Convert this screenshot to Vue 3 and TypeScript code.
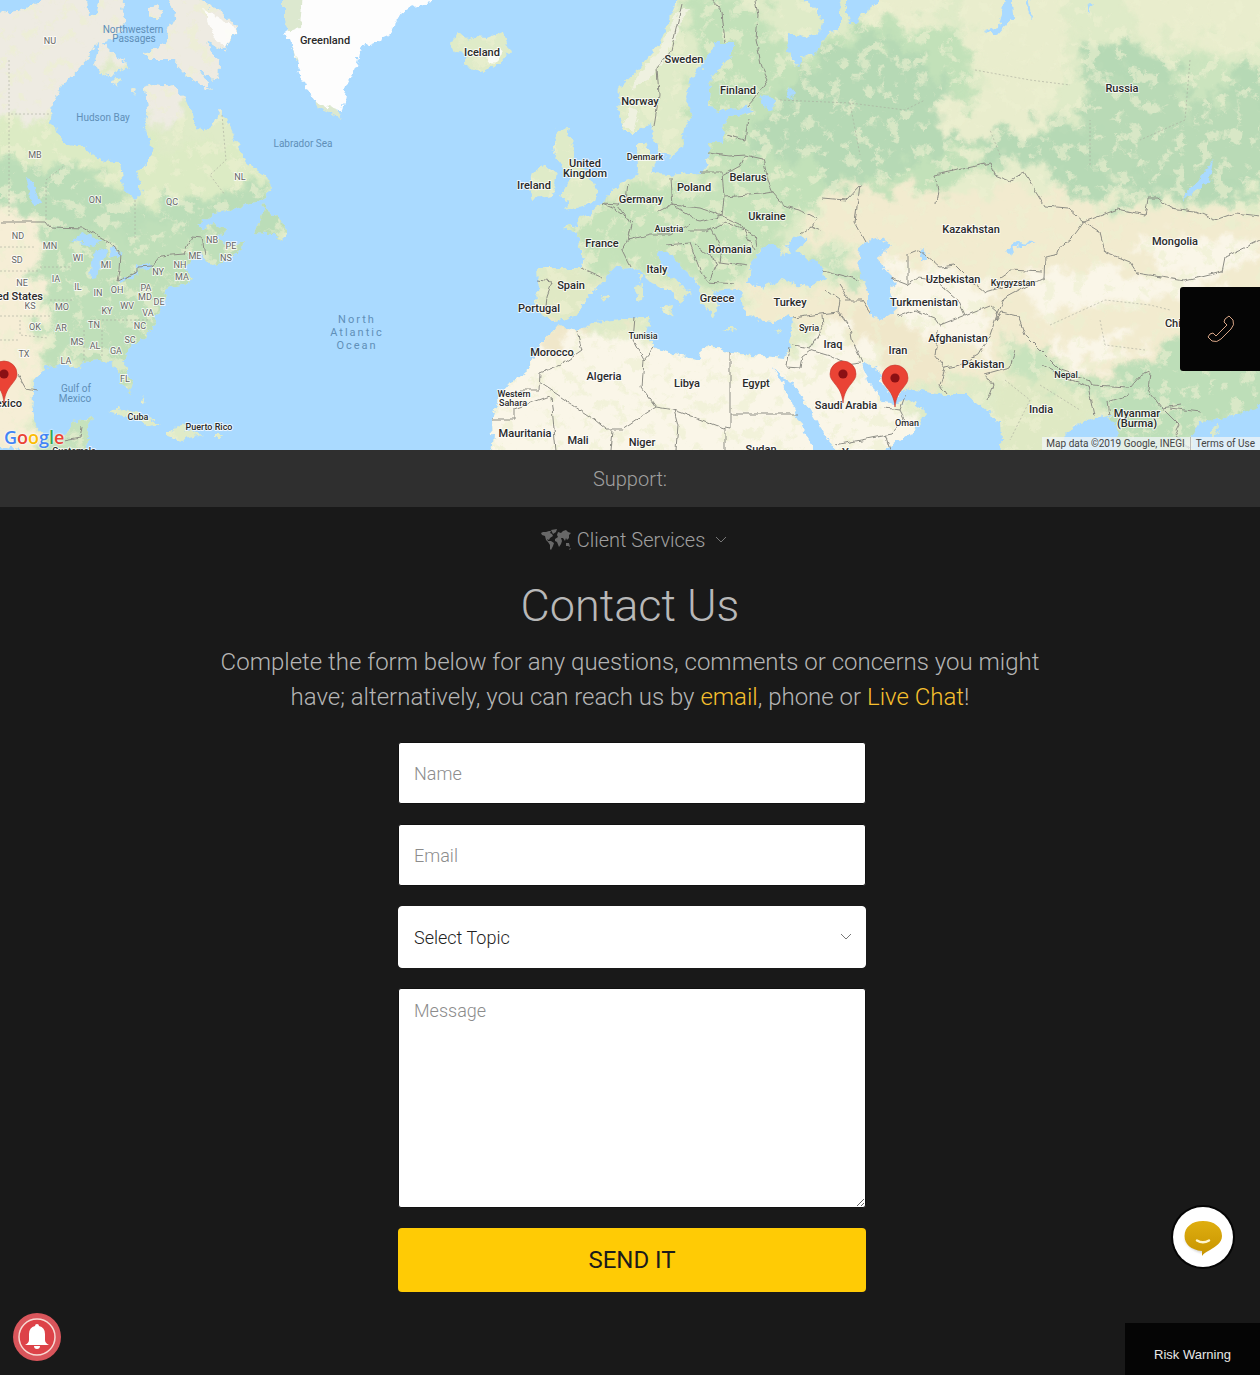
<script setup lang="ts">
import { ref } from 'vue'

type Kind = 'country' | 'small' | 'state' | 'water' | 'ocean'
interface MapLabel { t: string; x: number; y: number; k: Kind }

const make = (k: Kind, rows: [string, number, number][]): MapLabel[] =>
  rows.map(([t, x, y]) => ({ t, x, y, k }))

const labels: MapLabel[] = [
  ...make('country', [
    ['Greenland', 325, 44], ['Iceland', 482, 56], ['Sweden', 684, 63], ['Finland', 738, 94],
    ['Norway', 640, 105], ['Russia', 1122, 92], ['United', 585, 167], ['Kingdom', 585, 177],
    ['Ireland', 534, 189], ['Poland', 694, 191], ['Belarus', 748, 181], ['Germany', 641, 203],
    ['Ukraine', 767, 220], ['France', 602, 247], ['Romania', 730, 253], ['Italy', 657, 273],
    ['Spain', 571, 289], ['Greece', 717, 302], ['Portugal', 539, 312], ['Turkey', 790, 306],
    ['Kazakhstan', 971, 233], ['Mongolia', 1175, 245], ['Uzbekistan', 953, 283],
    ['Turkmenistan', 924, 306], ['Afghanistan', 958, 342], ['Pakistan', 983, 368],
    ['Iraq', 833, 348], ['Iran', 898, 354], ['Morocco', 552, 356], ['Algeria', 604, 380],
    ['Libya', 687, 387], ['Egypt', 756, 387], ['Saudi Arabia', 846, 409], ['Mauritania', 525, 437],
    ['Mali', 578, 444], ['Niger', 642, 446], ['Sudan', 761, 453], ['India', 1041, 413],
    ['Myanmar', 1137, 417], ['(Burma)', 1137, 427], ['China', 1179, 327], ['Yemen', 859, 456],
    ['United States', 10, 300], ['Mexico', 4, 407]
  ]),
  ...make('small', [
    ['Denmark', 645, 160], ['Austria', 669, 232], ['Tunisia', 643, 339], ['Western', 514, 397],
    ['Sahara', 513, 406], ['Syria', 809, 331], ['Kyrgyzstan', 1013, 286], ['Oman', 907, 426],
    ['Nepal', 1066, 378], ['Cuba', 138, 420], ['Puerto Rico', 209, 430], ['Guatemala', 74, 454]
  ]),
  ...make('state', [
    ['NU', 50, 44], ['MB', 35, 158], ['ON', 95, 203], ['QC', 172, 205], ['NL', 240, 180],
    ['ND', 18, 239], ['MN', 50, 249], ['SD', 17, 263], ['WI', 78, 261], ['MI', 106, 268],
    ['NE', 22, 286], ['IA', 56, 282], ['IL', 78, 290], ['IN', 98, 296], ['OH', 117, 293],
    ['PA', 146, 291], ['MD', 145, 300], ['DE', 159, 305], ['KS', 30, 309], ['MO', 62, 310],
    ['KY', 107, 314], ['WV', 127, 309], ['VA', 148, 316], ['OK', 35, 330], ['AR', 61, 331],
    ['TN', 94, 328], ['NC', 140, 329], ['MS', 77, 345], ['AL', 95, 349], ['SC', 130, 343],
    ['TX', 24, 357], ['GA', 116, 354], ['LA', 66, 364], ['FL', 125, 382], ['NB', 212, 243],
    ['PE', 231, 249], ['NS', 226, 261], ['ME', 195, 259], ['NH', 180, 268], ['NY', 158, 275],
    ['MA', 182, 280]
  ]),
  ...make('water', [
    ['Northwestern', 133, 33], ['Passages', 134, 42], ['Hudson Bay', 103, 121],
    ['Labrador Sea', 303, 147], ['Gulf of', 76, 392], ['Mexico', 75, 402]
  ]),
  ...make('ocean', [['North', 357, 323], ['Atlantic', 357, 336], ['Ocean', 357, 349]])
]

const pins = [{ x: 4, y: 401 }, { x: 843, y: 401 }, { x: 895, y: 405 }]

const logo = [
  { c: 'G', color: '#4285f4' }, { c: 'o', color: '#ea4335' }, { c: 'o', color: '#fbbc05' },
  { c: 'g', color: '#4285f4' }, { c: 'l', color: '#34a853' }, { c: 'e', color: '#ea4335' }
]

const name = ref('')
const email = ref('')
const topic = ref('')
const message = ref('')
</script>

<template>
  <div class="page">
    <section class="map" aria-label="Office locations">
      <svg class="map-canvas" viewBox="0 0 1260 450" preserveAspectRatio="xMidYMid slice">
        <defs>
          <filter id="rough" filterUnits="userSpaceOnUse" x="-20" y="-20" width="1300" height="490" color-interpolation-filters="sRGB">
            <feTurbulence type="fractalNoise" baseFrequency="0.14" numOctaves="3" seed="4" />
            <feDisplacementMap in="SourceGraphic" scale="9" xChannelSelector="R" yChannelSelector="G" />
          </filter>
          <filter id="patchy" x="-10%" y="-10%" width="120%" height="120%" color-interpolation-filters="sRGB">
            <feTurbulence type="fractalNoise" baseFrequency="0.05" numOctaves="5" seed="9" result="n" />
            <feDisplacementMap in="SourceGraphic" in2="n" scale="56" xChannelSelector="R" yChannelSelector="G" />
            <feGaussianBlur stdDeviation="2" />
          </filter>
          <filter id="wiggle" x="0" y="0" width="1260" height="450" filterUnits="userSpaceOnUse" color-interpolation-filters="sRGB">
            <feTurbulence type="fractalNoise" baseFrequency="0.12" numOctaves="2" seed="2" />
            <feDisplacementMap in="SourceGraphic" scale="5" xChannelSelector="R" yChannelSelector="G" />
          </filter>
          <filter id="mottle" x="0" y="0" width="100%" height="100%" color-interpolation-filters="sRGB">
            <feTurbulence type="fractalNoise" baseFrequency="0.07" numOctaves="5" seed="21" />
            <feColorMatrix values="0 0 0 0 0.93  0 0 0 0 0.94  0 0 0 0 0.82  0 8 0 0 -4.4" />
          </filter>
          <clipPath id="land">
            <path d="M-20 14L12 12 22 10 32 6 42 0V-20H86V0L87 10 91 18 96 14 98 0V-20H123V0L121 10 126 18 121 30 115 38 104 41 97 44 92 50 85 62 80 68 72 75 60 87 52 103 49 123 58 130 63 144 83 148 100 160 120 164 123 190 135 200 142 193 137 170 147 163 153 150 148 135 142 127 147 117 144 87 153 84 172 86 187 100 193 113 197 127 205 131 213 125 220 108 228 123 237 143 247 163 267 177 271 187 267 198 247 205 233 210 213 213 197 226 204 229 214 222 224 228 219 238 228 246 245 240 239 252 216 266 208 262 200 254 187 264 186 271 193 278 185 284 167 288 163 302 157 315 155 325 143 337 128 350 123 362 132 382 130 393 122 385 117 368 110 363 97 361 83 363 77 368 63 364 47 367 35 378 33 392 32 412 35 425 44 435 66 435 73 422 92 418 87 438 85 470H40L20 450-20 444Z" />
            <path d="M168 -20V0L176 15 168 30 165 44 145 53 147 60 173 60 187 75 212 91 199 70 218 81 219 63 206 42 225 50 237 27 220 11 198 0V-20ZM101 40L114 52 130 68 107 75 93 68ZM112 80L122 78 116 87ZM132 86L136 88 134 94ZM149 8L158 5 162 13 155 21 149 16ZM264 204L270 214 283 222 288 236 283 241 272 234 253 233 262 218ZM108 412L122 408 137 413 150 420 162 425 150 427 134 418 116 414ZM168 433L178 426 192 430 202 435 190 438 180 440 168 437ZM215 434H224L221 438H215ZM142 396L147 402 143 404Z" />
            <path d="M452 43L458 32 467 40 475 37 487 38 502 32 510 50 500 64 483 72 463 65 468 54 456 53ZM547 165L557 173 553 195 532 199 529 189 533 173ZM557 130L570 129 568 137 576 145 573 160 583 167 590 180 597 190 594 203 578 207 563 210 570 200 560 197 565 187 570 180 563 167 555 157 553 144Z" />
            <path d="M685 -20L677 0 660 43 640 66 620 87 618 110 625 132 637 132 650 123 655 140 660 153 672 157 683 147 685 127 692 113 686 97 692 77 703 65 713 43 732 43 732 55 712 77 710 103 717 112 750 107 753 112 727 118 723 128 725 143 710 142 708 163 700 172 670 175 650 174 656 163 645 143 637 147 638 167 637 177 620 183 608 197 600 204 590 215 578 219 579 225 562 228 577 235 583 255 580 268 560 268 538 268 539 285 535 302 542 317 555 322 577 315 588 298 603 280 613 268 630 267 639 270 653 284 673 291 680 305 685 297 693 295 667 275 658 253 670 253 683 268 698 282 702 302 713 317 720 305 713 290 737 288 743 292 740 298 747 315 757 320 773 322 790 315 793 322 788 348 785 358 773 357 730 353 713 345 702 350 700 360 677 355 653 347 647 335 650 317 635 317 597 322 577 332 557 325 540 345 530 368 512 382 498 398 492 422 493 435 490 470H1280V-20ZM660 307L674 305 671 318ZM636 286L643 284 643 299 637 300ZM638 275L642 275 641 283ZM722 328L736 328 735 331ZM774 331L782 328 779 333ZM602 297L607 295 606 299Z" />
          </clipPath>
        </defs>

        <rect width="1260" height="450" fill="#aadaff" />
        <g filter="url(#rough)">
          <rect x="-20" y="-20" width="1300" height="490" fill="#aadaff" />
          <g clip-path="url(#land)">
            <rect x="-20" y="-20" width="1300" height="490" fill="#dfebc8" />
            <g filter="url(#patchy)">
              <!-- tundra and ice -->
              <path fill="#eeebe2" d="M-40-40H250V110L200 100 150 130 130 60 60 120 0 115H-40Z" />
              <path fill="#dcebc4" d="M0 115L60 125 150 140 240 150 280 200H0Z" />
              <!-- boreal north america -->
              <path fill="#bbddb8" d="M-20 160L40 165 80 170 130 205 200 195 280 180 300 230 250 280 60 280 40 220 -20 200Z" />
              <path fill="#bfdfb9" d="M40 230H240V290L150 350 130 400 100 365 45 365Z" />
              <path fill="#f6eed6" d="M-40 210H38L42 290 36 380 30 480H-40Z" />
              <path fill="#c6e2bd" d="M40 400H100V480H40Z" />
              <!-- northern europe and siberia -->
              <path fill="#c2e1b9" d="M680 -20L760 10 800 60 860 20 960 30 1000 200 800 210 690 150 700 80Z" />
              <path fill="#b6d9b5" d="M800 70L860 35 920 50 960 110 1090 120 1090 40 1140 50 1290 70V190L1180 215 1080 215 980 150 900 165 860 190 800 160 740 150Z" />
              <path fill="#e9edcd" d="M960 -40H1060L1070 70 1040 130 960 140 930 110 1000 90 965 50ZM1100 -40H1300V50L1150 40ZM860 -40H960L940 20 870 25Z" />
              <path fill="#b9dab6" d="M1080 60L1150 80 1290 100V180L1100 180Z" />
              <path fill="#cbe4be" d="M1170 50L1240 60 1230 100 1180 105Z" />
              <path fill="#e6edcc" d="M970 160L1040 165 1080 200 1130 205 1100 160 1140 200 1290 210V240H940Z" />
              <!-- temperate europe -->
              <path fill="#c5e2ba" d="M570 215L640 190 780 165 800 225 720 290 640 265 590 275Z" />
              <path fill="#e0e9c5" d="M540 270H620L590 330H530ZM640 265L700 310 670 315Z" />
              <!-- steppe and plateaus -->
              <path fill="#f2ebcf" d="M830 185L930 190 1060 190 1120 215 1290 210V330L1080 400 980 380 860 330 740 330 750 290 830 285 850 240 800 240Z" />
              <path fill="#c6e2bd" d="M806 240L870 265 865 290 830 280Z" />
              <!-- deserts -->
              <path fill="#faf6e8" d="M470 325L700 340 790 355 840 320 900 380 940 480H470Z" />
              <path fill="#faf6e8" d="M880 250L1000 290 980 350 900 320ZM1020 275L1100 268 1190 275 1250 300 1150 300 1040 315ZM1040 335L1140 340 1100 370 1060 360ZM1120 240H1260V270L1180 275Z" />
              <path fill="#f0e7ca" d="M545 330L580 325 560 350 540 355ZM600 322L640 320 620 330ZM820 300L920 330 960 390 900 380Z" />
              <!-- monsoon asia -->
              <path fill="#dfe9c4" d="M1000 350L1060 370 1090 385 1080 480H990Z" />
              <path fill="#bddeb8" d="M1090 380L1150 365 1170 330 1290 350V420L1200 430 1180 480H1120Z" />
              <path fill="#c8e3bd" d="M1000 335L1060 365 1130 388 1120 400 1040 380 1010 360Z" />
            </g>
            <rect width="1260" height="450" filter="url(#mottle)" opacity=".6" />
            <path fill="#fff" opacity=".8" d="M204 8L236 28 226 48 214 38ZM487 58L500 48 502 54 492 64Z" />
            <path fill="#f3f3e6" opacity=".8" d="M630 90L640 74 662 44 680 8 688 8 668 54 650 78ZM624 128L630 108 638 112 634 130Z" />
          </g>
          <path fill="#dce8cf" d="M284 -20H310V50L296 60 284 16ZM314 98L334 102 341 118 318 108Z" />
          <path fill="#fdfdfd" d="M304 -20H438L432 3 412 6 402 12 388 36 360 48 356 68 347 84 342 112 320 104 312 98 300 74 297 60 290 40 284 34 300 28Z" />
          <!-- inland seas and lakes -->
          <g fill="#aadaff">
            <path d="M748 281L752 262 767 245 778 246 783 257 789 253 786 245 797 236 806 238 806 244 795 251 822 267 825 280 802 287 782 280 762 288Z" />
            <path d="M803 -20V0L815 8 822 20 820 32 808 37 788 33 787 53 798 66 804 62 800 55 815 56 820 45 828 33 840 31 840 12 836 -20ZM846 -20V10L850 24 857 24 862 14 880 0V-20Z" />
            <path d="M1005 -20V0H1012L1013 17 998 35 985 31 998 27 1012 -20ZM1026 -20L1030 0 1032 20 1028 12ZM1088 6L1092 4 1088 14Z" />
            <path d="M860 248L870 240 880 238 890 245 877 258 887 272 897 282 890 288 895 312 883 320 868 313 868 292 858 268Z" />
            <path d="M1213 160L1210 180 1193 193 1180 200 1197 182ZM762 97L772 98 774 108 765 110ZM787 88L794 92 793 101ZM920 250L926 247 927 262 921 260ZM1006 251L1014 242 1037 243 1014 248 1010 254Z" />
            <path d="M780 377L792 382 816 420 835 450V470H820L813 450 800 422ZM772 366L784 380 781 382Z" />
            <path d="M862 362L877 368 884 388 894 398 906 391 915 390 943 395 968 395 987 412 1000 422 1003 470H880L885 450 913 432 927 412 909 399 904 402 895 404 883 402 878 392 868 382Z" />
            <path d="M1055 470L1064 438 1080 422 1110 415 1117 430 1124 470ZM1195 470L1192 436 1199 421 1216 420 1236 415 1280 400V470Z" />
            <path d="M70 240L86 233 101 240 96 246ZM92 281L91 262 97 250 107 249 106 258 99 264 97 280ZM112 247L121 252 119 260 111 255ZM117 280L137 272 138 275 120 283ZM137 265L150 263 150 268 138 269ZM25 178L31 179 40 203 34 205Z" />
          </g>
          <path fill="#dce9c8" d="M1211 428L1219 425 1218 434 1211 436Z" />
        </g>

        <g class="borders" filter="url(#wiggle)">
          <path d="M0 222H46L50 227 84 228 108 242 120 252 119 272 117 281 138 272 138 267 152 266 160 256 184 254 192 236 202 237 205 256M18 375L26 389 38 391M64 441L80 438 82 426" />
          <path d="M682 4L671 50 657 68 659 95 654 127M712 0L722 12 725 43M755 0L758 15 756 40 762 68 768 80 755 98 746 108M748 120L745 140 727 135M708 153L730 156 745 155 763 159 768 180 773 192 760 194 724 197 722 172 700 172M745 155L740 166 722 176M724 197L722 216 700 208 672 205 670 178M658 212L672 205 688 214 700 222 722 216 740 224 755 250M773 192L785 206 800 210 817 219 812 226 822 230M628 184L626 200 618 205 632 224 628 240 650 234 670 234 690 224M603 204L615 209 634 222M618 205L603 204M628 240L622 250 630 266M582 269L602 278M538 280L552 282 547 296 546 308M688 230L712 230 722 250 720 262 748 266M665 245L690 243 700 270 708 282 735 284M695 245L718 262 710 280M706 232L725 222 755 235 757 246" />
          <path d="M577 332L582 350 560 365 540 373 539 390 520 390M492 419H514V409L550 396M539 382L595 420 607 430 622 430 656 407 674 410 724 428 725 427 730 428V353M635 317L633 340 644 360 642 388 656 407M644 360L654 348M551 397L556 450M613 430L611 450M674 410L678 425 676 450M725 428V450M730 414H798M793 318L820 314 838 312M793 345L810 348 823 328 822 315M786 366L789 347M786 367L800 368 802 356 810 350 830 356 845 364 860 362M838 312L850 328 852 340 862 362M838 312L840 300 826 290M846 300L862 300 870 312M885 408L900 410 905 396M900 410L905 420 892 434 835 445M885 434L890 450" />
          <path d="M936 205L938 190 935 175 990 163 995 175 1010 181 1024 172 1045 206 1068 208 1084 222 1118 209 1145 215 1148 198 1158 198 1170 208 1195 211 1215 220 1235 213 1260 216M1084 222L1100 232 1105 252 1130 262 1137 273 1185 281 1222 272 1225 257 1260 240M1084 222L1072 238 1058 250 1056 255 1045 257 1044 278 1015 292 1004 298 996 320 1002 312M1000 277L1010 270 1042 272M890 278L908 285V255L920 250 940 267 955 265 970 280 985 292 1002 287M908 285L918 278 935 280 958 300 965 315 940 325 935 318 915 310 898 316M965 315L990 305 998 312 990 335 978 355 960 365 945 368 935 355 938 330M945 368L940 385 947 395M1002 312L1018 316 1025 335 1040 350M987 400L993 385 985 375 1010 368 1015 350M822 198L846 200 860 185 855 222 866 242M800 235L812 226M1040 350L1060 370 1090 380 1092 386 1130 388 1140 376 1150 372 1148 390 1162 408 1180 405M1043 365L1060 375 1088 386 1094 416M1110 415L1108 402 1128 395M1165 410L1180 425 1175 435 1190 448M1170 408L1200 412M822 270L860 280M840 285L850 300" />
        </g>
        <path class="provinces" d="M9 60V114H49M9 114V218M46 220V180L65 165M135 200V240M0 271H40M0 247H36M0 316H50M20 320V335L48 338M0 340H20M40 267H72M50 300H74M90 320H150M84 330V362M102 330V358M222 115L226 160 210 175 225 195M780 100L850 103 905 110 925 100M850 103L860 155M975 70L1030 80 1070 85M1000 155L990 130M1190 60L1185 120 1140 140M1090 165V120M1005 380L1030 400 1010 440M1040 385L1080 410M1050 325L1105 300 1150 305 1170 310M1100 320L1105 345 1145 350" />

        <g>
          <text v-for="(l, i) in labels" :key="i" :x="l.x" :y="l.y" :class="['lab', l.k]">{{ l.t }}</text>
        </g>
        <g v-for="p in pins" :key="p.x" :transform="`translate(${p.x} ${p.y})`">
          <path d="M0 2C-1-8-4-12-8-17-11-21-13-23-13-27A13 13 0 0 1 13-27C13-23 11-21 8-17 4-12 1-8 0 2Z" fill="#ea4335" stroke="#c5352b" stroke-width=".6" />
          <circle cy="-27" r="4.6" fill="#8b1014" />
        </g>
      </svg>
      <a class="google" href="#" aria-label="Google Maps"><span v-for="(g, i) in logo" :key="i" :style="{ color: g.color }">{{ g.c }}</span></a>
      <div class="credits"><span>Map data ©2019 Google, INEGI</span><a href="#">Terms of Use</a></div>
    </section>

    <div class="support">Support:</div>

    <main class="content">
      <button class="services" type="button">
        <svg class="world" viewBox="0 0 30 22" aria-hidden="true">
          <path fill="#686868" d="M0 4L2 3 5 3 8 2 10 2 9 4 11 5 12 7 9 9 8 11 6 10 7 12 10 12 13 14 12 17 10 21 9 20 9 16 7 13 5 11 4 7 1 6ZM10 1L16 0 15 3 12 5 11 3ZM16 6L17 3 20 4 22 2 25 1 27 3 30 4 28 6 28 9 26 11 25 9 24 12 22 9 20 9 21 12 20 15 18 18 16 13 14 12 14 10 17 8ZM25 14L28 14 29 18 27 17 25 17ZM28 20L30 19 29 21Z" />
        </svg>
        <span>Client Services</span>
        <svg class="chevron" viewBox="0 0 12 8" aria-hidden="true"><path d="M1 1L6 6 11 1" /></svg>
      </button>

      <h1>Contact Us</h1>
      <p class="intro">
        Complete the form below for any questions, comments or concerns you might have;
        alternatively, you can reach us by <a href="#">email</a>, phone or <a href="#">Live Chat</a>!
      </p>

      <form class="form" @submit.prevent>
        <input v-model="name" type="text" placeholder="Name" aria-label="Name" />
        <input v-model="email" type="email" placeholder="Email" aria-label="Email" />
        <div class="select">
          <select v-model="topic" aria-label="Select Topic">
            <option value="">Select Topic</option>
          </select>
          <svg class="chevron" viewBox="0 0 12 8" aria-hidden="true"><path d="M1 1L6 6 11 1" /></svg>
        </div>
        <textarea v-model="message" placeholder="Message" aria-label="Message"></textarea>
        <button class="send" type="submit">SEND IT</button>
      </form>
    </main>

    <button class="phone" type="button" aria-label="Call us">
      <svg viewBox="0 0 28 28" aria-hidden="true">
        <path d="M22 1L26 5Q28 10 24 14L14 24Q10 28 5 26L1 22 3 19 6 18 9 21 20 10 17 7 18 4Z" />
      </svg>
    </button>
    <button class="bell" type="button" aria-label="Notifications">
      <svg viewBox="0 0 48 48" aria-hidden="true">
        <circle cx="24" cy="24" r="24" fill="#d9555b" />
        <circle cx="24" cy="24" r="18" fill="#dd4248" stroke="#f7d9d3" stroke-width="1.5" />
        <path fill="#fff" d="M24 11Q26 11 26 13 32 14.500 32 21V27Q32 30 36 32H12Q16 30 16 27V21Q16 14.500 22 13 22 11 24 11ZM21 33H27Q27 36 24 36 21 36 21 33Z" />
      </svg>
    </button>
    <button class="chat" type="button" aria-label="Live chat">
      <svg viewBox="0 0 60 60" aria-hidden="true">
        <defs>
          <linearGradient id="gold" x1="0" y1="0" x2="0" y2="1"><stop offset="0" stop-color="#dfae10" /><stop offset="1" stop-color="#c79400" /></linearGradient>
          <filter id="soft" x="-30%" y="-30%" width="160%" height="160%"><feGaussianBlur stdDeviation="1.2" /></filter>
        </defs>
        <path fill="#d4d4d4" filter="url(#soft)" d="M11 32Q16 43 28 46L36 43Z" />
        <path fill="url(#gold)" d="M30 14C41 14 49 20 49 29 49 36 42 40 37 43 33 45 30 47 29 49V44C18 43 11.500 37 11.500 29 11.500 20 19 14 30 14Z" />
        <path fill="none" stroke="#fff6cf" stroke-width="2.5" stroke-linecap="round" d="M24 33.500Q30 37 36 33.500" />
      </svg>
    </button>
    <a class="risk" href="#">Risk Warning</a>
  </div>
</template>

<style>
body { background: #191919; }
</style>

<style scoped>
.page { min-height: 100vh; background: #191919; color: #b5b5b5; font-family: Roboto, "Liberation Sans", sans-serif; font-weight: 300; }
button, input, select, textarea { font: inherit; border: 0; margin: 0; box-sizing: border-box; }
button { cursor: pointer; }

.map { position: relative; height: 450px; overflow: hidden; background: #aadaff; }
.map-canvas { display: block; width: 100%; height: 100%; }
.borders { fill: none; stroke: #8d8d85; stroke-width: 1; stroke-linejoin: round; }
.provinces { fill: none; stroke: #a9aa9c; stroke-width: 1; stroke-dasharray: 2 2; opacity: .6; }
.lab { text-anchor: middle; font-weight: 500; font-size: 11px; fill: #2a2a2a; stroke: #fff; stroke-opacity: .75; stroke-width: 2px; paint-order: stroke; stroke-linejoin: round; }
.small { font-size: 9px; }
.state { font-size: 9px; font-weight: 400; fill: #666; }
.water { font-size: 10px; font-weight: 400; fill: #5f8fb8; stroke: none; }
.ocean { font-size: 11px; font-weight: 400; fill: #5f8fb8; stroke: none; letter-spacing: 2px; }
.google { position: absolute; left: 4px; bottom: 1px; font: 600 18px/24px "Open Sans", sans-serif; text-decoration: none; text-shadow: 0 0 2px #fff, 0 0 2px #fff; }
.credits { position: absolute; right: 0; bottom: 0; display: flex; gap: 5px; padding: 0 5px 0 4px; background: rgba(240, 244, 245, .75); color: #444; font-size: 10px; font-weight: 400; line-height: 13px; }
.credits a { padding-left: 5px; border-left: 1px solid #bbb; color: inherit; text-decoration: none; }

.support { height: 57px; background: #2f2f2f; color: #a0a0a0; text-align: center; font-size: 20px; line-height: 58px; }
.content { display: flex; flex-direction: column; align-items: center; padding-bottom: 84px; }
.services { display: flex; align-items: center; gap: 6px; height: 36px; margin-top: 15px; margin-left: 8px; padding: 0; background: none; color: #a0a0a0; font-size: 20px; }
.world { width: 30px; height: 22px; }
.chevron { width: 12px; height: 8px; fill: none; stroke: #777; stroke-width: 1; }
.services .chevron { margin-left: 4px; }
h1 { margin: 20px 0 0; color: #b8b8b8; font-size: 45px; font-weight: 300; line-height: 56px; }
.intro { max-width: 840px; margin: 11px 0 0; text-align: center; font-size: 24px; line-height: 35px; }
.intro a { color: #f7c02e; text-decoration: none; }

.form { display: flex; flex-direction: column; gap: 20px; width: 468px; max-width: 100%; margin: 27px 0 0 4px; font-size: 18px; }
.form input, .form select, .form textarea { display: block; width: 100%; height: 62px; padding: 0 15px; border: 1px solid #111; border-radius: 3px; background: #fff; color: #222; outline: 0; }
.form ::placeholder { color: #8c8c8c; opacity: 1; }
.select { position: relative; }
.form select { appearance: none; border-color: #fff; border-radius: 4px; }
.select .chevron { position: absolute; right: 14px; top: 27px; }
.form textarea { height: 220px; padding-top: 11px; }
.send { height: 64px; border-radius: 4px; background: #ffcb05; color: #1b1b1b; font-size: 24px; font-weight: 400; }

.phone { position: fixed; right: 0; top: 287px; width: 80px; height: 84px; padding: 0 0 0 2px; border-radius: 3px 0 0 3px; background: #050505; }
.phone svg { width: 28px; height: 28px; fill: none; stroke: #d8a586; stroke-width: 1; stroke-linejoin: round; vertical-align: middle; }
.bell { position: fixed; left: 13px; bottom: 14px; width: 48px; height: 48px; padding: 0; border-radius: 50%; background: none; }
.bell svg, .chat svg { display: block; width: 100%; height: 100%; }
.chat { position: fixed; right: 25px; bottom: 106px; width: 64px; height: 64px; padding: 2px; border-radius: 50%; background: #050505; }
.chat svg { border-radius: 50%; background: #fff; }
.risk { position: fixed; right: 0; bottom: 0; box-sizing: border-box; width: 135px; height: 52px; padding-top: 6px; background: #050505; color: #e8e8e8; text-align: center; text-decoration: none; font: 400 13px/52px "Liberation Sans", sans-serif; }
</style>
